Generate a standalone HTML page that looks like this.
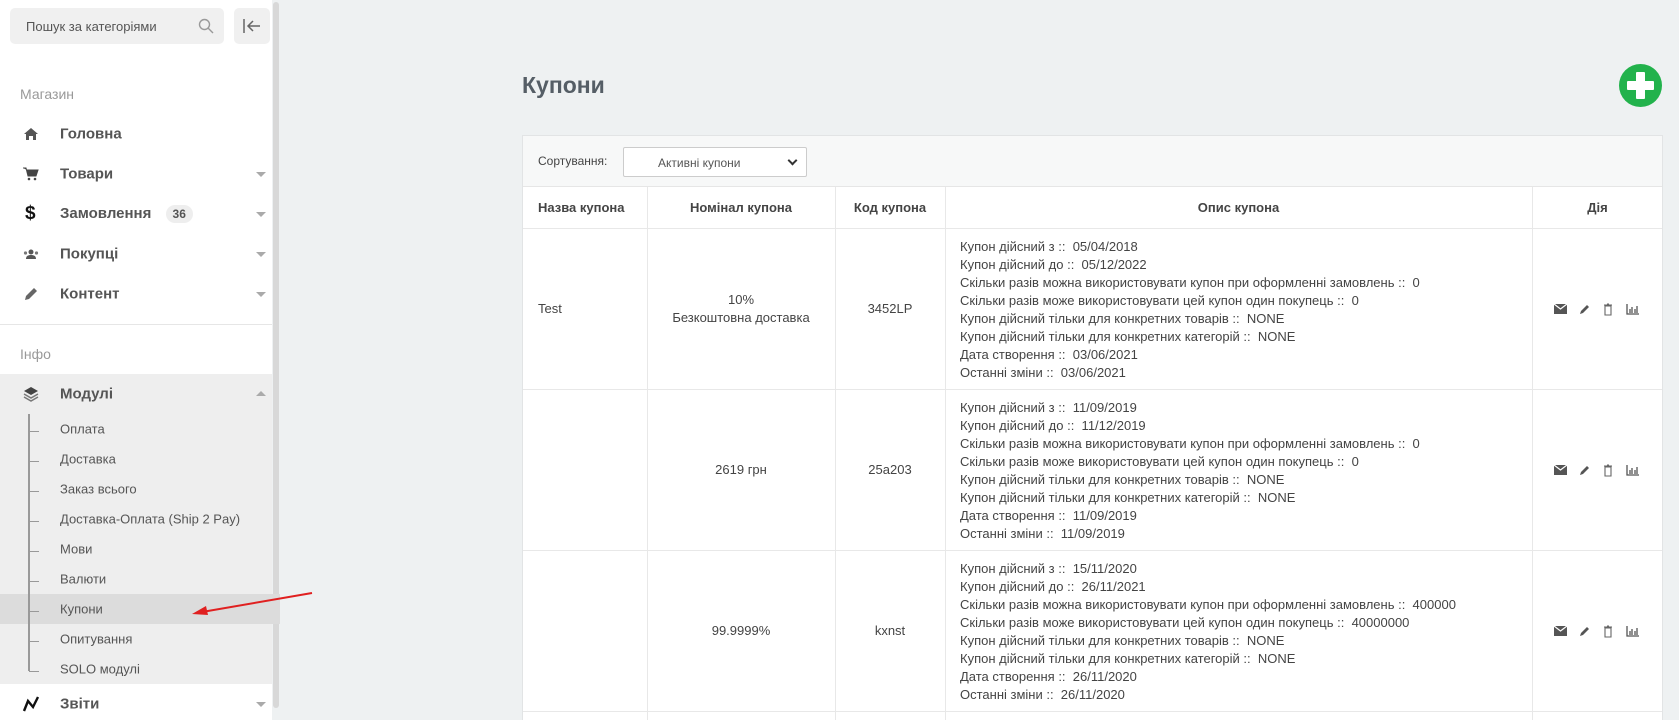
<!DOCTYPE html>
<html><head><meta charset="utf-8">
<style>
*{box-sizing:border-box;margin:0;padding:0}
html,body{width:1679px;height:720px;overflow:hidden}
body{background:#eef1f2;font-family:"Liberation Sans","Noto Sans CJK SC",sans-serif;color:#444;position:relative}
.sb{position:absolute;left:0;top:0;width:272px;height:720px;background:#fff}
.scroll{position:absolute;left:273px;top:2px;width:6px;height:706px;background:#d8d8d8;border-radius:3px}
.search{position:absolute;left:10px;top:8px;width:214px;height:36px;background:#f0f0f0;border-radius:5px;font-size:13px;color:#555;padding:11px 0 0 16px}
.coll{position:absolute;left:234px;top:8px;width:36px;height:36px;background:#f0f0f0;border-radius:5px}
.sec{position:absolute;left:20px;font-size:14px;color:#999}
.mi{position:absolute;left:60px;font-size:15px;font-weight:bold;color:#555;transform:translateY(-50%)}
.ic{position:absolute;left:22px;width:18px;height:18px;transform:translateY(-50%)}
.car{position:absolute;left:256px;width:0;height:0;border-left:5px solid transparent;border-right:5px solid transparent;border-top:5px solid #aaa}
.mod{position:absolute;left:0;top:374px;width:272px;height:310px;background:#eee}
.sub{position:absolute;left:60px;font-size:13px;color:#555;transform:translateY(-50%)}
.tick{position:absolute;left:29px;width:10px;height:1px;background:#999}
h1{position:absolute;left:522px;top:72px;font-size:23px;font-weight:bold;color:#555e66}
.plus{position:absolute;left:1619px;top:64px;width:43px;height:43px;border-radius:50%;background:#22b24c}
.plus:before{content:"";position:absolute;left:17px;top:8px;width:9px;height:27px;background:#fff;border-radius:1px}
.plus:after{content:"";position:absolute;left:8px;top:17px;width:27px;height:9px;background:#fff;border-radius:1px}
.panel{position:absolute;left:522px;top:135px;width:1141px;height:585px;background:#fff;border:1px solid #e2e4e5;border-bottom:none;overflow:hidden}
.filt{position:absolute;left:0;top:0;width:100%;height:51px;background:#f7f8f8;border-bottom:1px solid #e6e6e6}
.filt span{position:absolute;left:15px;top:18px;font-size:12px;color:#444}
.sel{position:absolute;left:100px;top:11px;width:184px;height:30px;border:1px solid #ccc;border-radius:2px;background:#fff;font-size:12px;color:#555;padding:8px 0 0 34px}
.sel i{position:absolute;right:10px;top:9px;width:7px;height:7px;border-right:2px solid #333;border-bottom:2px solid #333;transform:rotate(45deg)}
.vl{position:absolute;top:51px;width:1px;height:560px;background:#e8e8e8}
.hl{position:absolute;left:0;width:100%;height:1px;background:#e8e8e8}
.th{position:absolute;top:64px;font-size:13px;font-weight:bold;color:#444}
.c{position:absolute;font-size:13px;color:#444;text-align:center;line-height:18px}
.desc{position:absolute;left:437px;font-size:13px;line-height:18px;color:#444}
.acts{position:absolute;left:1030px;width:100px;height:14px}
</style></head><body>
<div class="sb"></div><div class="scroll"></div>
<div class="search">Пошук за категоріями
<svg style="position:absolute;right:10px;top:10px" width="16" height="16" viewBox="0 0 16 16"><circle cx="6.5" cy="6.5" r="5" fill="none" stroke="#999" stroke-width="1.4"/><path d="M10 10l5 5" stroke="#999" stroke-width="1.4"/></svg></div>
<div class="coll"><svg style="position:absolute;left:8px;top:10px" width="20" height="16" viewBox="0 0 20 16"><path d="M2 1v14M18 8H6M11 3L6 8l5 5" fill="none" stroke="#666" stroke-width="1.5"/></svg></div>
<div class="sec" style="top:86px">Магазин</div>
<svg class="ic" style="top:134px" viewBox="0 0 18 18"><path d="M2 9L9 3l7 6h-2v6h-3v-4H7v4H4V9z" fill="#555"/></svg>
<div class="mi" style="top:134px">Головна</div>
<svg class="ic" style="top:174px" viewBox="0 0 18 18"><path d="M1 3h3l2 8h8l2-6H5" fill="#444" stroke="#444"/><circle cx="7" cy="14" r="1.3" fill="#444"/><circle cx="13" cy="14" r="1.3" fill="#444"/></svg>
<div class="mi" style="top:174px">Товари</div><div class="car" style="top:172px"></div>
<div class="ic" style="top:214px;font-weight:bold;font-size:19px;color:#111;left:25px;height:auto">$</div>
<div class="mi" style="top:214px">Замовлення <span style="display:inline-block;background:#eee;border-radius:9px;font-size:12px;padding:2px 7px;margin-left:10px">36</span></div><div class="car" style="top:212px"></div>
<svg class="ic" style="top:254px" viewBox="0 0 18 18"><circle cx="9" cy="7" r="2.5" fill="#555"/><path d="M4 14c0-3 2-4 5-4s5 1 5 4z" fill="#555"/><circle cx="3.5" cy="8" r="1.6" fill="#777"/><circle cx="14.5" cy="8" r="1.6" fill="#777"/></svg>
<div class="mi" style="top:254px">Покупці</div><div class="car" style="top:252px"></div>
<svg class="ic" style="top:294px" viewBox="0 0 18 18"><path d="M3 15l1-4 8-8 3 3-8 8z" fill="#666"/></svg>
<div class="mi" style="top:294px">Контент</div><div class="car" style="top:292px"></div>
<div style="position:absolute;left:0;top:324px;width:272px;height:1px;background:#e6e6e6"></div>
<div class="sec" style="top:346px">Інфо</div>
<div class="mod"></div>
<div style="position:absolute;left:0;top:594px;width:280px;height:30px;background:#dcdcdc"></div>
<svg class="ic" style="top:394px" viewBox="0 0 18 18"><path d="M9 2l7 4-7 4-7-4z" fill="#444"/><path d="M2 9l7 4 7-4M2 12l7 4 7-4" fill="none" stroke="#777" stroke-width="1.5"/></svg>
<div class="mi" style="top:394px">Модулі</div>
<div style="position:absolute;left:256px;top:391px;border-left:5px solid transparent;border-right:5px solid transparent;border-bottom:5px solid #aaa"></div>
<div style="position:absolute;left:28px;top:414px;width:1.5px;height:257px;background:#999"></div>
<div class="tick" style="top:431px"></div><div class="sub" style="top:429px">Оплата</div>
<div class="tick" style="top:461px"></div><div class="sub" style="top:459px">Доставка</div>
<div class="tick" style="top:491px"></div><div class="sub" style="top:489px">Заказ всього</div>
<div class="tick" style="top:521px"></div><div class="sub" style="top:519px">Доставка-Оплата (Ship 2 Pay)</div>
<div class="tick" style="top:551px"></div><div class="sub" style="top:549px">Мови</div>
<div class="tick" style="top:581px"></div><div class="sub" style="top:579px">Валюти</div>
<div class="tick" style="top:611px"></div><div class="sub" style="top:609px">Купони</div>
<div class="tick" style="top:641px"></div><div class="sub" style="top:639px">Опитування</div>
<div class="tick" style="top:671px"></div><div class="sub" style="top:669px">SOLO модулі</div>
<svg style="position:absolute;left:190px;top:590px" width="125" height="30" viewBox="0 0 125 30"><path d="M122 3L12 22" stroke="#e02020" stroke-width="2"/><path d="M2 24l14-8 2 9z" fill="#e02020"/></svg>
<svg class="ic" style="top:704px" viewBox="0 0 18 18"><path d="M2 16l4-10 5 6 5-10" fill="none" stroke="#111" stroke-width="2.4"/></svg>
<div class="mi" style="top:704px">Звіти</div><div class="car" style="top:702px"></div>

<h1>Купони</h1>
<div class="plus"></div>
<div class="panel">
<div class="filt"><span>Сортування:</span><div class="sel">Активні купони<i></i></div></div>
<div class="vl" style="left:124px"></div><div class="vl" style="left:312px"></div><div class="vl" style="left:422px"></div><div class="vl" style="left:1009px"></div>
<div class="hl" style="top:92px"></div><div class="hl" style="top:253px"></div><div class="hl" style="top:414px"></div><div class="hl" style="top:575px"></div>
<div class="th" style="left:15px">Назва купона</div>
<div class="th" style="left:124px;width:188px;text-align:center">Номінал купона</div>
<div class="th" style="left:312px;width:110px;text-align:center">Код купона</div>
<div class="th" style="left:422px;width:587px;text-align:center">Опис купона</div>
<div class="th" style="left:1009px;width:131px;text-align:center">Дія</div>

<div class="c" style="left:15px;top:164px">Test</div>
<div class="c" style="left:124px;width:188px;top:155px">10%<br>Безкоштовна доставка</div>
<div class="c" style="left:312px;width:110px;top:164px">3452LP</div>
<div class="desc" style="top:102px">Купон дійсний з ::&nbsp; 05/04/2018<br>Купон дійсний до ::&nbsp; 05/12/2022<br>Скільки разів можна використовувати купон при оформленні замовлень ::&nbsp; 0<br>Скільки разів може використовувати цей купон один покупець ::&nbsp; 0<br>Купон дійсний тільки для конкретних товарів ::&nbsp; NONE<br>Купон дійсний тільки для конкретних категорій ::&nbsp; NONE<br>Дата створення ::&nbsp; 03/06/2021<br>Останні зміни ::&nbsp; 03/06/2021</div>

<div class="c" style="left:124px;width:188px;top:325px">2619 грн</div>
<div class="c" style="left:312px;width:110px;top:325px">25a203</div>
<div class="desc" style="top:263px">Купон дійсний з ::&nbsp; 11/09/2019<br>Купон дійсний до ::&nbsp; 11/12/2019<br>Скільки разів можна використовувати купон при оформленні замовлень ::&nbsp; 0<br>Скільки разів може використовувати цей купон один покупець ::&nbsp; 0<br>Купон дійсний тільки для конкретних товарів ::&nbsp; NONE<br>Купон дійсний тільки для конкретних категорій ::&nbsp; NONE<br>Дата створення ::&nbsp; 11/09/2019<br>Останні зміни ::&nbsp; 11/09/2019</div>

<div class="c" style="left:124px;width:188px;top:486px">99.9999%</div>
<div class="c" style="left:312px;width:110px;top:486px">kxnst</div>
<div class="desc" style="top:424px">Купон дійсний з ::&nbsp; 15/11/2020<br>Купон дійсний до ::&nbsp; 26/11/2021<br>Скільки разів можна використовувати купон при оформленні замовлень ::&nbsp; 400000<br>Скільки разів може використовувати цей купон один покупець ::&nbsp; 40000000<br>Купон дійсний тільки для конкретних товарів ::&nbsp; NONE<br>Купон дійсний тільки для конкретних категорій ::&nbsp; NONE<br>Дата створення ::&nbsp; 26/11/2020<br>Останні зміни ::&nbsp; 26/11/2020</div>

<svg class="acts" style="top:166px" viewBox="0 0 100 14"><path d="M1 2h13v10H1z" fill="#555"/><path d="M1 2l6.5 5L14 2" fill="none" stroke="#fff" stroke-width="1.2"/><path d="M27 12l1-3 6-6 2 2-6 6z" fill="#555"/><path d="M51 3h8M54 2h2M52 4h6v9h-6z" fill="none" stroke="#666" stroke-width="1.1"/><path d="M74 2v10h12M77 11V7M79 11V5M82 11V7M84 11V4" stroke="#555" stroke-width="1.3" fill="none"/></svg>
<svg class="acts" style="top:327px" viewBox="0 0 100 14"><path d="M1 2h13v10H1z" fill="#555"/><path d="M1 2l6.5 5L14 2" fill="none" stroke="#fff" stroke-width="1.2"/><path d="M27 12l1-3 6-6 2 2-6 6z" fill="#555"/><path d="M51 3h8M54 2h2M52 4h6v9h-6z" fill="none" stroke="#666" stroke-width="1.1"/><path d="M74 2v10h12M77 11V7M79 11V5M82 11V7M84 11V4" stroke="#555" stroke-width="1.3" fill="none"/></svg>
<svg class="acts" style="top:488px" viewBox="0 0 100 14"><path d="M1 2h13v10H1z" fill="#555"/><path d="M1 2l6.5 5L14 2" fill="none" stroke="#fff" stroke-width="1.2"/><path d="M27 12l1-3 6-6 2 2-6 6z" fill="#555"/><path d="M51 3h8M54 2h2M52 4h6v9h-6z" fill="none" stroke="#666" stroke-width="1.1"/><path d="M74 2v10h12M77 11V7M79 11V5M82 11V7M84 11V4" stroke="#555" stroke-width="1.3" fill="none"/></svg>
</div>
</body></html>
